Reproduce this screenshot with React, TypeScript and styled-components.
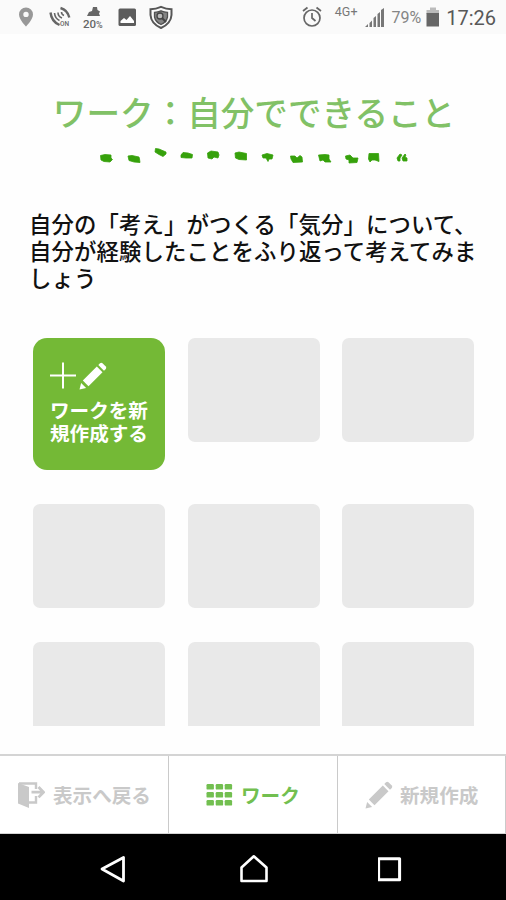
import React from "react";
import styled, { createGlobalStyle } from "styled-components";

const GlobalStyle = createGlobalStyle`
  * { box-sizing: border-box; }
  body {
    margin: 0;
    background: #fff;
    font-family: "Noto Sans CJK JP", "Noto Sans", sans-serif;
  }
`;

const Screen = styled.div`
  width: 506px;
  height: 900px;
  display: flex;
  flex-direction: column;
  overflow: hidden;
  background: #fefefe;
`;

const StatusBar = styled.header`
  height: 34px;
  flex: none;
  display: flex;
  justify-content: space-between;
  background: #fafafa;
`;

const StatusText = styled.span<{ $size: number; $color: string; $top: number; $left?: number; $right?: number; $weight?: number }>`
  font-family: Roboto, sans-serif;
  font-size: ${(p) => p.$size}px;
  font-weight: ${(p) => p.$weight ?? 400};
  line-height: 20px;
  height: 20px;
  color: ${(p) => p.$color};
  margin: ${(p) => p.$top}px ${(p) => p.$right ?? 0}px 0 ${(p) => p.$left ?? 0}px;
  white-space: nowrap;
`;

const StatusGroup = styled.div`
  display: flex;
  align-items: flex-start;
  padding-right: 10px;
`;

const Content = styled.main`
  flex: none;
  height: 692px;
  overflow: hidden;
`;

const Title = styled.h1`
  margin: 54px 0 0 2px;
  height: 48px;
  line-height: 48px;
  font-size: 33.6px;
  font-weight: 500;
  color: #81c166;
  text-align: center;
  white-space: nowrap;
`;

const Divider = styled.svg`
  display: block;
  margin: 10px 0 0 96px;
`;

const Lead = styled.p`
  margin: 44px 0 0 29px;
  width: 465px;
  font-size: 22.4px;
  letter-spacing: 0.1px;
  line-height: 27px;
  font-weight: 500;
  color: #111;
`;

const Grid = styled.div`
  display: grid;
  grid-template-columns: repeat(3, 132px);
  column-gap: 22.7px;
  row-gap: 34px;
  margin: 47px 0 0 33px;
`;

const Tile = styled.div`
  height: 104px;
  border-radius: 7px;
  background: #e9e9e9;
`;

const CreateTile = styled.button`
  height: 132px;
  border: 0;
  border-radius: 14px;
  background: #74b936;
  color: #fff;
  padding: 23px 0 0 17px;
  display: flex;
  flex-direction: column;
  align-items: flex-start;
  text-align: left;
  font: 700 19.6px/23.4px "Noto Sans CJK JP", sans-serif;
`;

const CreateIcons = styled.svg`
  display: block;
  margin-bottom: 8px;
`;

const TabBar = styled.nav`
  flex: none;
  height: 80px;
  margin-top: 28px;
  display: grid;
  grid-template-columns: 169px 169px 168px;
  border-top: 2px solid #d4d4d4;
  border-bottom: 1px solid #d4d4d4;
`;

const Tab = styled.button<{ $active?: boolean; $pad: number; $gap: number }>`
  display: flex;
  align-items: center;
  gap: ${(p) => p.$gap}px;
  padding: 0 0 0 ${(p) => p.$pad}px;
  border: 0;
  border-right: 1px solid #cacaca;
  background: #fff;
  color: ${(p) => (p.$active ? "#72bf50" : "#c9c9c9")};
  font: 700 19.6px/24px "Noto Sans CJK JP", sans-serif;
  white-space: nowrap;
`;

const SystemNav = styled.footer`
  flex: none;
  height: 66px;
  background: #000;
  display: flex;
  padding: 18px 0 0 98px;
  gap: 108px;
`;

const dashes = [
  "4.5,9.5 9,8.5 15,9 15,12 16.5,13.5 14,16 8,15.5 5,14",
  "32,10 36,9.5 43,11 43.5,13 44,16.5 38,16 33,14.5",
  "59.5,2.5 63,3 70,6 70,8 67,10.5 63,8.5 59,6",
  "85,9 87,6.5 92,7 96.5,8.5 96,12 90,12 85,11.5",
  "111.5,7 115,5 122,6 123,9 122,12 118,11 116,13 112,12",
  "139,7 143,6 150.5,7.5 150.5,14 143,13.5 139.5,12",
  "166,9 171,7.5 177,9 176,13 173,13 172,15.5 170,12 167,12",
  "194.5,10 199,10 201,12 204,9.5 206,11 206.5,16 197,16.5 195,13",
  "222.5,9 229,8.5 233,9 233,13 235,16 229,16 227,14 224,15",
  "249.5,10 254,9 257,12 262,12 261,16.5 253,17 253,14 250,13",
  "273,7.5 282.5,7.5 283,15.5 279,14 276,14 274,16 272.5,13",
  "301,12 304,8 306,9 304,12 304,15 302,15",
  "306,12 309,8 310,9 309,11 311,12 311,15 307,15",
];

const PencilShape = ({ transform }: { transform?: string }) => (
  <g fill="currentColor" transform={transform}>
    <path d="M0 27 L1.6 20.4 L6.6 25.4 Z" />
    <path d="M3.3 18 L17.3 4 L23 9.7 L9 23.7 Z" />
    <path d="M18.8 2.5 L20.5 .8 Q21.8 -.2 23 .8 L26.3 4 Q27.2 5.2 26.3 6.4 L24.5 8.2 Z" />
  </g>
);

const LeftStatusIcons = () => (
  <svg width="180" height="34" viewBox="0 0 180 34">
    <path fill="#989898" fillRule="evenodd" d="M26 7.5a7 7 0 0 0-7 7c0 5 7 12 7 12s7-7 7-12a7 7 0 0 0-7-7Zm0 4.2a2.7 2.7 0 1 1 0 5.4 2.7 2.7 0 0 1 0-5.4Z" />
    <g fill="none" stroke="#666">
      <path d="M50.5 12.5Q51.5 21.5 59.5 25" strokeWidth="2.4" />
      <path d="M54.5 13Q55 18.5 59.5 20.5M58 12.5Q58 16.5 62 18M61.5 12Q61.5 14.5 64 15.5" strokeWidth="1.6" />
      <path d="M60.5 8Q67.5 10 69.3 17.5" strokeWidth="2.4" />
    </g>
    <text x="60" y="25.8" fontSize="6.5" fontFamily="Roboto, sans-serif" fontWeight="500" fill="#666">ON</text>
    <path fill="#666" d="M87 16l2-4 3-1 1-4h4l.5 3 2.5 1.5-1 2 1 2.5Z" />
    <text x="83" y="28.3" fontSize="11.5" fontFamily="Roboto, sans-serif" fontWeight="500" fill="#666">20<tspan fontSize="9">%</tspan></text>
    <rect x="118.5" y="8.5" width="17.5" height="17.5" rx="1.5" fill="#5c5c5c" />
    <path fill="#fff" d="M120.5 23v-2l3.5-3 2.5 2 3.5-4 4 5v2Z" />
    <path fill="#fafafa" stroke="#565656" strokeWidth="2" d="M150.5 9.2Q156 9 161 6.8Q166 9 171.5 9.2V15Q171 23.5 161 28Q151 23.5 150.5 15Z" />
    <path fill="#858585" stroke="#515151" strokeWidth="1.3" d="M154.5 12.4Q158 12 161 10.8Q164 12 167.5 12.4V17Q166.5 22 161 24.5Q155.5 22 154.5 17Z" />
    <circle cx="160" cy="16" r="3" fill="#bbb" stroke="#444" strokeWidth="1.3" />
    <path d="M162 18l4 4" stroke="#444" strokeWidth="2" />
  </svg>
);

const AlarmIcon = () => (
  <svg width="24" height="34" viewBox="0 0 24 34" fill="none" stroke="#666" strokeWidth="1.7">
    <circle cx="12" cy="18" r="8" />
    <path d="M12 13v5l3.5 3M3 11l4.5-3.5M21 11l-4.5-3.5" />
  </svg>
);

const SignalIcon = () => (
  <svg width="22" height="34" viewBox="0 0 22 34" fill="#777">
    <path d="M1 27l3-3v3ZM5.5 23l2.5-2.5V27H5.5ZM9.5 18l2.5-2V27H9.5ZM13.5 14l2.5-2V27h-2.5ZM17 10l3-2V27h-3Z" />
  </svg>
);

const BatteryIcon = () => (
  <svg width="14" height="34" viewBox="0 0 14 34">
    <path fill="#bbb" d="M4 7.5h6V10h3v4H.5v-4H4Z" />
    <path fill="#666" d="M.5 13H13v13.5H.5Z" />
  </svg>
);

export default function App() {
  return (
    <>
      <GlobalStyle />
      <Screen>
        <StatusBar>
          <LeftStatusIcons />
          <StatusGroup>
            <AlarmIcon />
            <StatusText $size={12.5} $color="#777" $top={2} $left={11} $right={7}>4G+</StatusText>
            <SignalIcon />
            <StatusText $size={16} $color="#858585" $top={8} $left={5} $right={5}>79%</StatusText>
            <BatteryIcon />
            <StatusText $size={20} $color="#585858" $top={8} $left={6}>17:26</StatusText>
          </StatusGroup>
        </StatusBar>
        <Content>
          <Title>ワーク：自分でできること</Title>
          <Divider width="316" height="20" viewBox="0 0 316 20">
            <g fill="#36a10b" stroke="#36a10b" strokeWidth=".8" strokeLinejoin="round">
              {dashes.map((points) => <polygon key={points} points={points} />)}
            </g>
          </Divider>
          <Lead>自分の「考え」がつくる「気分」について、<br />自分が経験したことをふり返って考えてみま<br />しょう</Lead>
          <Grid>
            <CreateTile>
              <CreateIcons width="60" height="29" viewBox="0 0 60 29">
                <path d="M0 14.5h26M13 1.5v26" stroke="#fff" strokeWidth="2" />
                <PencilShape transform="translate(29.5 1.5)" />
              </CreateIcons>
              ワークを新<br />規作成する
            </CreateTile>
            <Tile /><Tile />
            <Tile /><Tile /><Tile />
            <Tile /><Tile /><Tile />
          </Grid>
        </Content>
        <TabBar>
          <Tab $pad={17} $gap={8}>
            <svg width="28" height="28" viewBox="0 0 28 28">
              <path fill="currentColor" d="M1 2L12 6V27L1 22.5Z" />
              <path fill="none" stroke="currentColor" strokeWidth="2.4" d="M2 2.5h17v5.5M12 21.5h7V15" />
              <path fill="none" stroke="currentColor" strokeWidth="2.8" d="M14.5 11.2h11.5M21.5 6l5 5.2-5 5.2" />
            </svg>
            表示へ戻る
          </Tab>
          <Tab $active $pad={37} $gap={8}>
            <svg width="27" height="24" viewBox="0 0 27 24" fill="currentColor">
              {[1, 9, 17].map((y) => [0.5, 9.7, 18.7].map((x) => <rect key={`${x}-${y}`} x={x} y={y} width="7.4" height="5.6" rx="1.2" />))}
            </svg>
            ワーク
          </Tab>
          <Tab $pad={27} $gap={7}>
            <svg width="28" height="28" viewBox="0 0 28 28"><PencilShape transform="translate(.5 .5)" /></svg>
            新規作成
          </Tab>
        </TabBar>
        <SystemNav>
          <svg width="32" height="34" viewBox="0 0 32 34"><path d="M4 17L25.5 5.5V29Z" fill="none" stroke="#fff" strokeWidth="2.8" strokeLinejoin="round" /></svg>
          <svg width="32" height="34" viewBox="0 0 32 34"><path d="M3.5 15.5L15.8 4.3L28.5 15.5V29H3.5Z" fill="none" stroke="#fff" strokeWidth="2.6" strokeLinejoin="round" /></svg>
          <svg width="32" height="34" viewBox="0 0 32 34"><rect x="0.6" y="6.8" width="21" height="21" fill="none" stroke="#fff" strokeWidth="3" strokeLinejoin="round" overflow="visible" /></svg>
        </SystemNav>
      </Screen>
    </>
  );
}
